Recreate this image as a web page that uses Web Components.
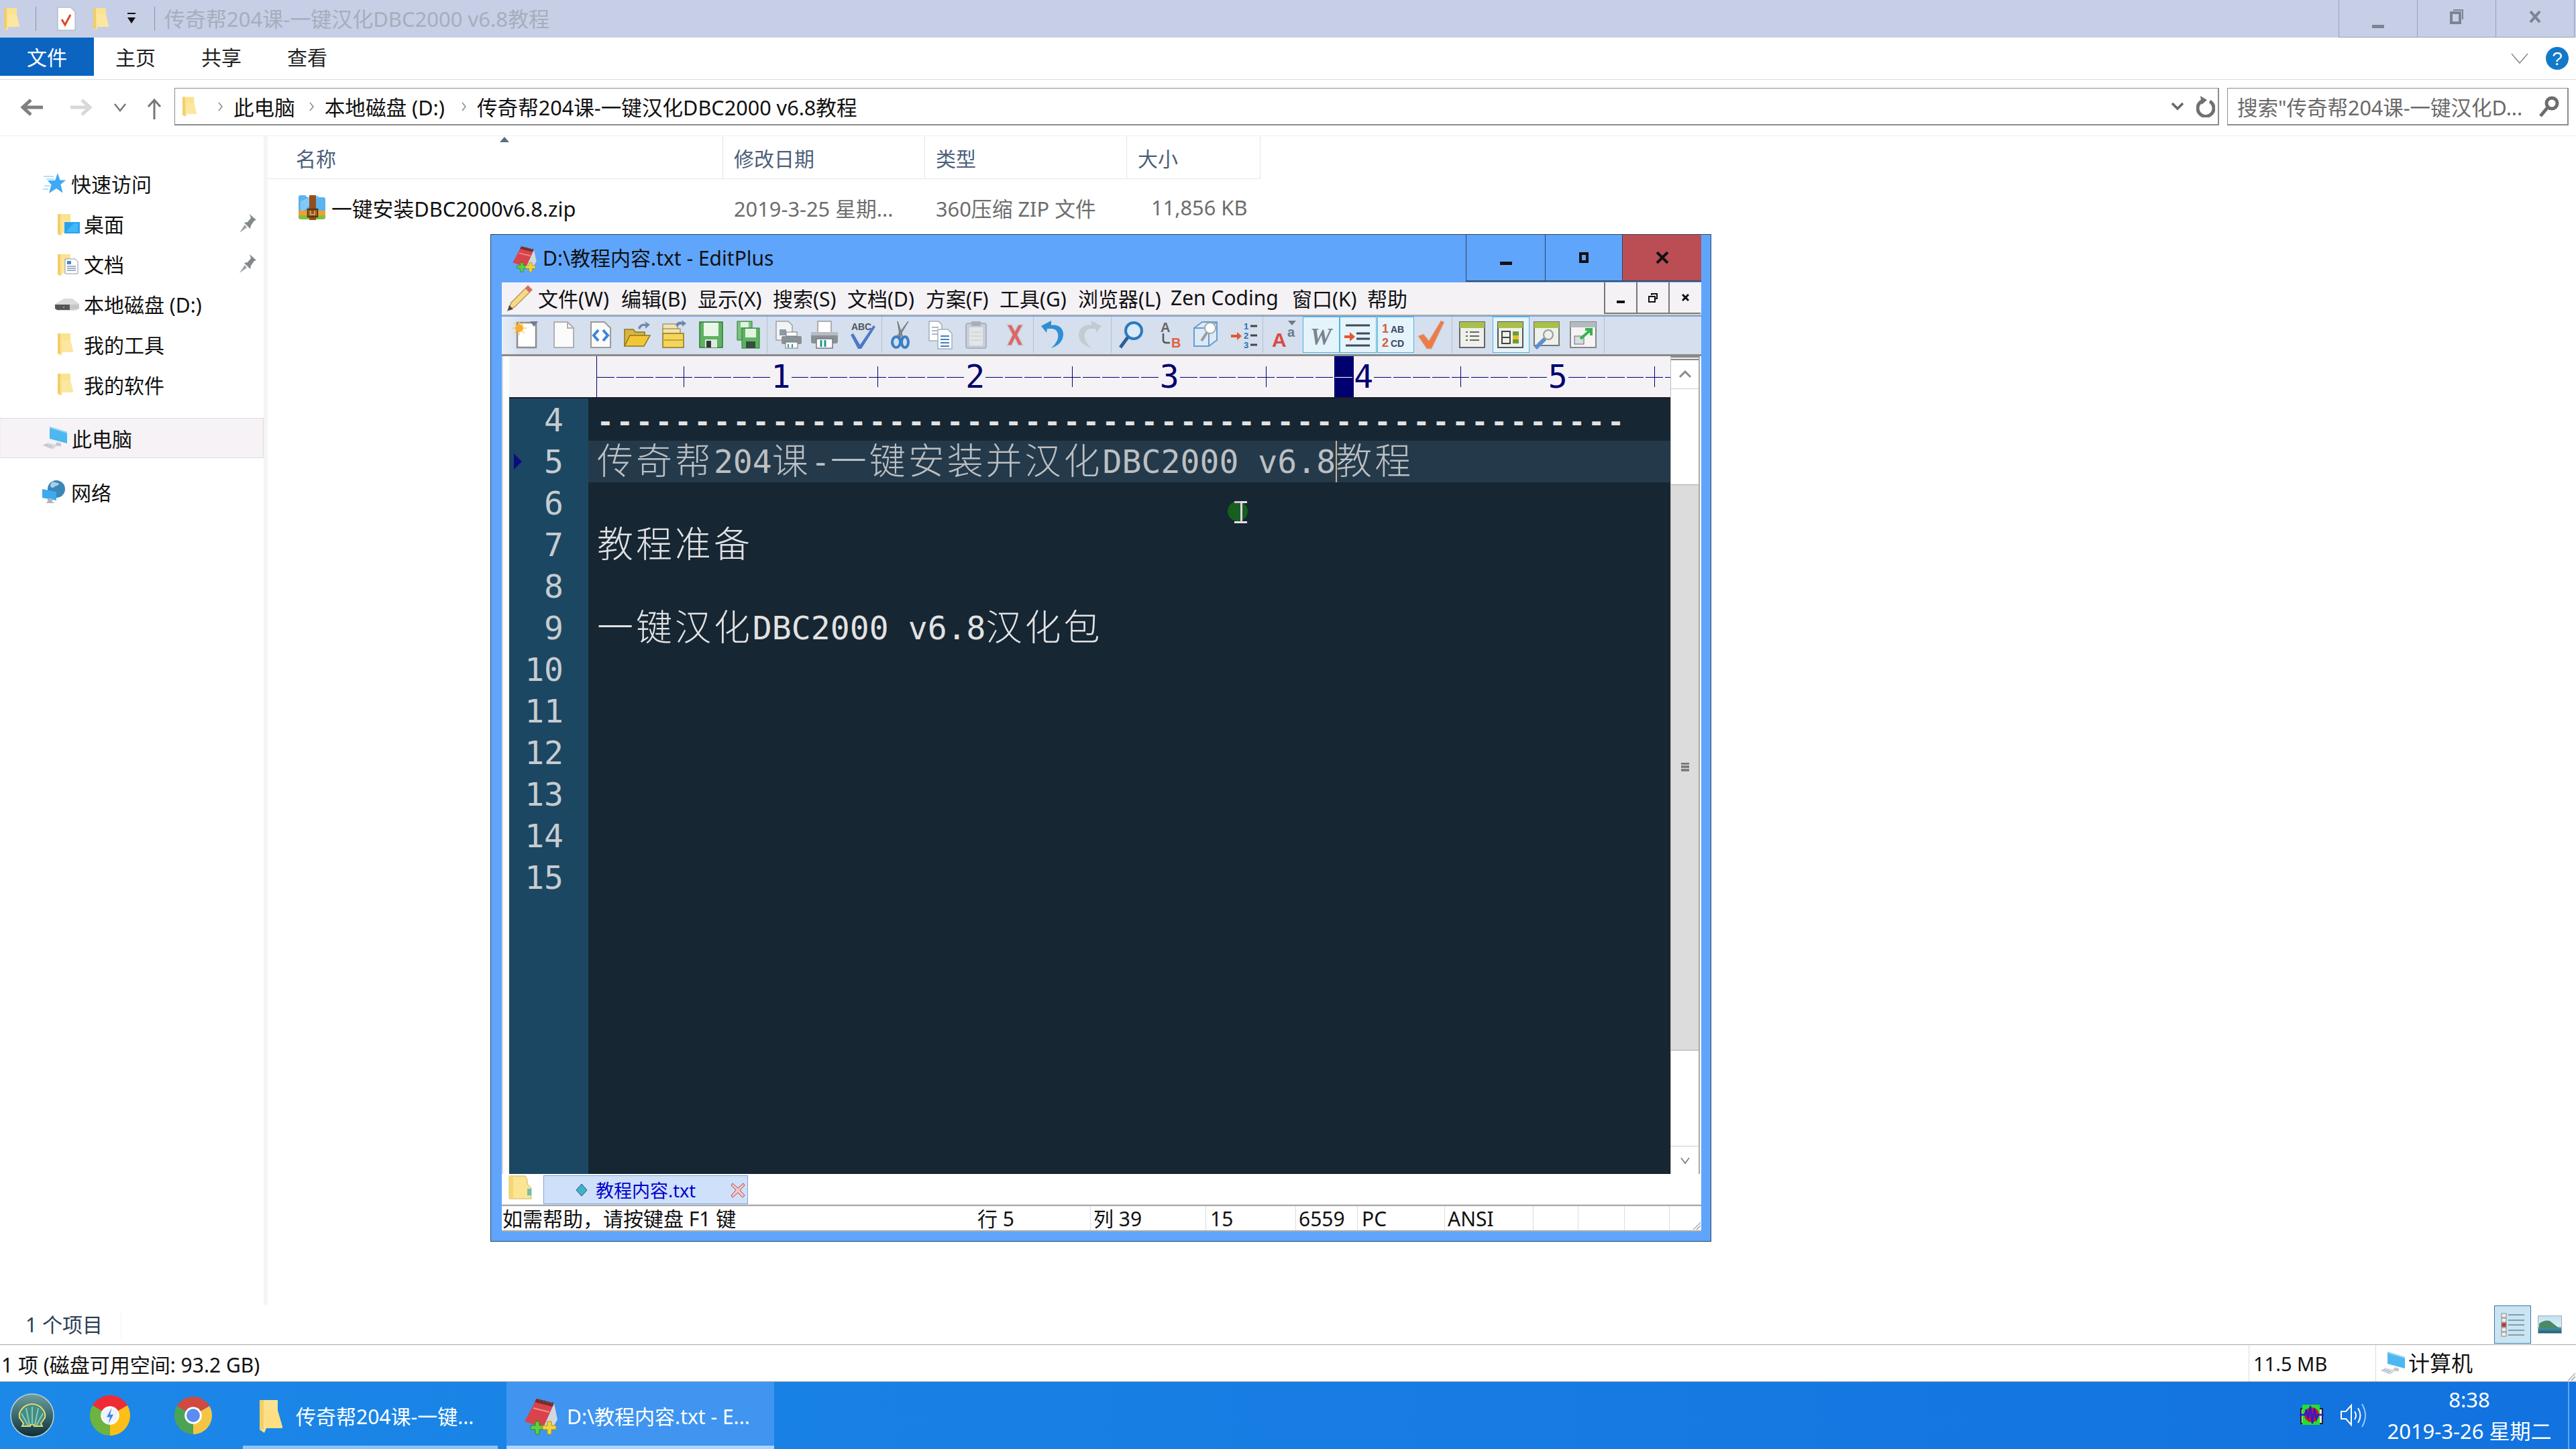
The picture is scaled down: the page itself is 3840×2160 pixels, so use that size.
<!DOCTYPE html>
<html lang="zh-CN">
<head>
<meta charset="utf-8">
<title>Explorer + EditPlus</title>
<style>
html,body{margin:0;padding:0;background:#fff}
body{width:3840px;height:2160px;overflow:hidden;position:relative;font:30px "Noto Sans","Noto Sans CJK SC",sans-serif;color:#111}
x-editplus{position:absolute;left:731px;top:349px}
</style>
</head>
<body>
<x-explorer></x-explorer>
<x-taskbar></x-taskbar>
<x-editplus></x-editplus>
<script>
const FOLD='<path d="M0 2h19v10l4 17v1H7l-2 5-5-3z" fill="#fae28f"/><path d="M0 2h4v31l-4-1z" fill="#f3cd66"/><path d="M4 12h15l4 17v1H7z" fill="#fbe79f"/>';
const ICONS={
folder:[24,36,FOLD],
foldertab:[36,38,'<path d="M2 1h24l3 6v6l6 6v16H2z" fill="#fbe592" stroke="#cdb467"/><path d="M2 1h6v34H2z" fill="#f6d674"/><path d="M29 20h6v10h-6z" fill="#74bcb6"/>'],
foldertask:[34,52,'<path d="M0 3h27v16l7 24v2H10l-3 7-7-5z" fill="#fae28f"/><path d="M0 3h6v44l-6-1z" fill="#f3cd66"/><path d="M6 19h21l7 24v2H10z" fill="#fcdf83"/>'],
folderdesk:[33,33,FOLD+'<rect x="10" y="14" width="23" height="17" fill="#2aa3ee"/><path d="M12 29l12-13h6v13z" fill="#44b6f6"/>'],
folderdoc:[33,33,FOLD+'<path d="M11 9h15l4 4v18H11z" fill="#fff" stroke="#8b98aa"/><path d="M14 12h6v5h-6z" fill="#4a86c8"/><path d="M14 20h13M14 23h13M14 26h13" stroke="#7f9abb" stroke-width="1.4"/>'],
doccheck:[28,36,'<path d="M1 1h19l7 7v27H1z" fill="#fff" stroke="#aab"/><path d="M7 19l5 8 8-15" fill="none" stroke="#d9492c" stroke-width="3"/>'],
star:[34,30,'<path d="M22 0l3.500 10.500H34l-7.500 6.500 3 12.500L20 23l-11 7 3.500-12.500L7 11h11z" fill="#3ea9f5"/><path d="M1 5h15M5 9h12M2 19h9M0 24h8" stroke="#9ad3fa" stroke-width="1.500"/>'],
drive:[36,20,'<path d="M0 10l14-8h12l10 8v7l-5 3H4l-4-3z" fill="#dcdcdc"/><path d="M0 11h22v8H3l-3-2z" fill="#555"/><rect x="12" y="14" width="2" height="2" fill="#4bd05b"/><path d="M22 11h14v6l-14 2z" fill="#c6c6c6"/>'],
computer:[37,34,'<path d="M11 0l26 8v17L11 18z" fill="#4db8f0"/><path d="M11 0l26 8v2L11 2z" fill="#8ed5f7"/><path d="M22 23l6 2v4h-10z" fill="#c3c7cc"/><path d="M0 28l8-4 15 4-8 6z" fill="#d7dade"/><path d="M3 28l5-2M7 29l6-2M10 31l6-2" stroke="#9ba2aa" stroke-dasharray="2 1"/>'],
network:[35,34,'<circle cx="21" cy="13" r="13" fill="#3c87b8"/><path d="M16 2c4 2 7 1 9 3-1 4-5 2-7 5-2 2-6 1-6-2 0-3 2-5 4-6z" fill="#a9cfe3"/><path d="M0 13l21 4v13L0 26z" fill="#3ea9ee"/><path d="M8 27h7v5l4 2H5l3-2z" fill="#aeb6bd"/>'],
zip:[40,38,'<path d="M0 4q0-3 3-3h7l3 3h24q3 0 3 3v20H0z" fill="#5cb3ee"/><path d="M3 10l18-8h10L8 24H3z" fill="#84c8f4" /><rect y="24" width="40" height="7" fill="#f0a02c"/><path d="M0 31h40v3q0 3-3 3H3q-3 0-3-3z" fill="#82c041"/><rect x="16" y="1" width="10" height="37" fill="#93501d"/><rect x="14" y="22" width="14" height="11" fill="none" stroke="#5f3410" stroke-width="2.500"/><path d="M18 24v6h6v-6" fill="none" stroke="#e4b36f" stroke-width="1.500"/>'],
pin:[25,28,'<path d="M15 0l10 9-3 1-5 7-1 5-9-9 5-1 5-6z" fill="#82898d"/><path d="M8 16L0 28l11-8z" fill="#9aa1a5"/>'],
canary:[60,60,'<g transform="scale(1.25)"><path d="M24 24L3.200 12A24 24 0 0 1 44.800 12Z" fill="#ef2b35"/><path d="M24 24L44.800 12A24 24 0 0 1 24 48Z" fill="#fcbf16"/><path d="M24 24L24 48A24 24 0 0 1 3.200 12Z" fill="#6cb33f"/><circle cx="24" cy="24" r="11" fill="#fff"/><circle cx="24" cy="24" r="9" fill="#eef3fa"/><path d="M26 15l-6 11h4l-2 8 6-11h-4z" fill="#3c83ef"/></g>'],
chrome:[56,56,'<g transform="scale(1.167)"><path d="M24 24L3.200 12A24 24 0 0 1 44.800 12Z" fill="#cf4a3f"/><path d="M24 24L44.800 12A24 24 0 0 1 24 48Z" fill="#f4c544"/><path d="M24 24L24 48A24 24 0 0 1 3.200 12Z" fill="#4ba356"/><circle cx="24" cy="24" r="11" fill="#fff"/><circle cx="24" cy="24" r="8.500" fill="#5b8dee"/></g>'],
shell:[66,66,'<defs><linearGradient id="s" x1="0" y1="0" x2="0" y2="1"><stop offset="0" stop-color="#6f9e9d"/><stop offset=".55" stop-color="#34646c"/><stop offset="1" stop-color="#0e2c35"/></linearGradient></defs><circle cx="33" cy="33" r="32" fill="url(#s)" stroke="#b9d2d6" stroke-width="1.500"/><path d="M14 36c-2-10 8-20 19-20s21 10 19 20l-6 9 2 4H36v-2h-6v2H18l2-4z" fill="#3f8f85" stroke="#e9d86a" stroke-width="2"/><path d="M33 20v28M24 22l5 25M42 22l-5 25M17 30l10 18M49 30L39 48" stroke="#8fc6b2" stroke-width="2" fill="none"/>'],
editplus:[56,55,'<path d="M20 2l26 7-16 36-28-9z" fill="#d9434b"/><path d="M20 2l26 7-2 5-27-7z" fill="#7d2a2a"/><path d="M46 9l5 24-9 16-12-4z" fill="#d3d8dc"/><path d="M24 6l2-3M30 7l2-3M36 9l2-3M42 10l2-3" stroke="#555" stroke-width="2"/><path d="M15 16l24 6" stroke="#ef8f8f" stroke-width="2"/><path d="M11 42h7v-6h6v6h7v6h-7v7h-6v-7h-7z" fill="#5dd040" stroke="#2c8a1c"/><path d="M29 42h7v-6h6v6h7v6h-7v7h-6v-7h-7z" fill="#f2d43a" stroke="#a2901c"/>'],
tray:[36,32,'<rect x="2" y="6" width="32" height="22" fill="#e6e6e6" stroke="#222" stroke-width="2"/><rect x="4" y="0" width="26" height="30" fill="#21e22a"/><ellipse cx="18" cy="15" rx="11" ry="11" fill="#d3112a"/><path d="M0 15h8l2-8 3 14 3-19 3 26 3-22 3 15 2-6h9" fill="none" stroke="#2a1bd1" stroke-width="2.500"/>'],
speaker:[40,34,'<path d="M2 11h7l8-9v29l-8-9H2z" fill="none" stroke="#fff" stroke-width="2"/><path d="M22 11q4 6 0 12" fill="none" stroke="#fff" stroke-width="2"/><path d="M27 6q7 11 0 22" fill="none" stroke="#fff" stroke-width="2"/><path d="M33 0q10 17 0 34" fill="none" stroke="#9cc9f5" stroke-width="2"/>'],
pencil:[40,40,'<path d="M2 38l5-12L32 1l6 6-25 25z" fill="#f5d88a" stroke="#b99a4e" stroke-width="1.500"/><path d="M28 5l6 6 4-4-6-6z" fill="#d66"/><path d="M2 38l2-8 6 6z" fill="#444"/>'],
tnew:[44,44,'<path d="M8 4h28v37H8z" fill="#fff" stroke="#8d8d8d" stroke-width="2.500"/><path d="M11 1v22M0 12h22M3 4l16 16M19 4L3 20" stroke="#f9cf63" stroke-width="1.500"/><circle cx="11" cy="12" r="6" fill="#f6ae2d"/><path d="M27 2h12l-6 8z" fill="#6d7d98"/>'],
tdoc:[44,44,'<path d="M8 3h20l9 9v29H8z" fill="#fbfbfb" stroke="#b0b0b0" stroke-width="2"/><path d="M28 3v9h9" fill="none" stroke="#b0b0b0" stroke-width="2"/>'],
thtml:[44,44,'<path d="M8 3h20l9 9v29H8z" fill="#fbfbfb" stroke="#9a9a9a" stroke-width="2"/><path d="M19 15l-7 8 7 8" fill="none" stroke="#3a86d8" stroke-width="4"/><path d="M26 15l7 8-7 8" fill="none" stroke="#3a86d8" stroke-width="4"/>'],
topen:[44,44,'<path d="M4 39V14h13l3 4h14v6" fill="#d9b540" stroke="#8d7524" stroke-width="1.500"/><path d="M4 39l8-16h30l-9 16z" fill="#f2c736" stroke="#8d7524" stroke-width="1.500"/><path d="M24 12q4-8 12-6l-2-4 8 5-7 6 0-4q-6-1-8 5z" fill="#6c88a8"/>'],
topenm:[44,44,'<path d="M5 6h22v8H5z" fill="#efe4c0" stroke="#8d7524"/><path d="M5 13h26v8H5z" fill="#f3e3a8" stroke="#8d7524"/><path d="M5 20h31v21H5z" fill="#f4d65a" stroke="#8d7524" stroke-width="1.500"/><path d="M5 30h31" stroke="#c8a52e" stroke-width="2"/><path d="M24 8q3-7 10-5l-1-3 7 5-6 5 0-3q-5-1-7 3z" fill="#6c88a8"/>'],
tsave:[44,44,'<rect x="5" y="3" width="34" height="38" fill="#5db360" stroke="#2d7a32" stroke-width="1.500"/><rect x="11" y="4" width="22" height="20" fill="#e9f6e8"/><rect x="13" y="29" width="18" height="12" fill="#dfe7e0"/><rect x="15" y="31" width="7" height="10" fill="#2e3b32"/>'],
tsaveall:[44,44,'<rect x="6" y="2" width="22" height="28" fill="#7cc07e" stroke="#2d7a32"/><rect x="11" y="3" width="12" height="8" fill="#e3f3e2"/><rect x="13" y="12" width="26" height="30" fill="#5db360" stroke="#2d7a32"/><rect x="18" y="13" width="16" height="13" fill="#e3f3e2"/><rect x="19" y="32" width="14" height="10" fill="#3a4b40"/>'],
tprev:[44,44,'<path d="M4 2h18l6 6v22H4z" fill="#f4f4f4" stroke="#9aa0a8" stroke-width="1.500"/><rect x="9" y="14" width="10" height="9" fill="#8c99a8"/><rect x="12" y="24" width="30" height="12" rx="2" fill="#8a9199"/><rect x="19" y="18" width="16" height="6" fill="#fff" stroke="#777"/><rect x="18" y="33" width="18" height="9" fill="#fff" stroke="#777"/><path d="M22 36v5M28 36v5" stroke="#2a9a8c" stroke-width="2"/>'],
tprint:[44,44,'<rect x="12" y="2" width="20" height="20" fill="#fff" stroke="#999" stroke-width="1.500"/><rect x="2" y="18" width="40" height="17" rx="3" fill="#8b9097"/><rect x="2" y="18" width="40" height="5" fill="#b7bcc2"/><rect x="10" y="28" width="24" height="14" fill="#fff" stroke="#777" stroke-width="1.500"/><path d="M17 30v10M23 30v10" stroke="#1f9a8e" stroke-width="3"/>'],
tspell:[44,44,'<text x="5" y="15" font-family="Liberation Sans" font-weight="700" font-size="14" fill="#4d5660" textLength="30">ABC</text><path d="M8 20l10 17L38 8l3 2-21 33h-5L4 22z" fill="#4e78c8"/>'],
tcut:[44,44,'<path d="M32 2L18 26l-3-2zM16 2l8 24-4 2z" fill="#9aa3ad" stroke="#666"/><ellipse cx="14" cy="33" rx="6" ry="8" fill="none" stroke="#3a7fc6" stroke-width="4"/><ellipse cx="27" cy="33" rx="5" ry="8" fill="none" stroke="#3a7fc6" stroke-width="4"/>'],
tcopy:[44,44,'<path d="M5 2h14l5 5v24H5z" fill="#fff" stroke="#a3aeba" stroke-width="1.500"/><path d="M9 11h10M9 16h10M9 21h10" stroke="#8ea2b8" stroke-width="1.500"/><path d="M18 14h15l6 6v23H18z" fill="#fff" stroke="#a3aeba" stroke-width="1.500"/><path d="M22 24h13M22 29h13M22 34h13M22 39h13" stroke="#3f84c4" stroke-width="2"/>'],
tpaste:[44,44,'<rect x="6" y="5" width="30" height="37" rx="3" fill="#c8cfd6" stroke="#a0a8b0" stroke-width="1.500"/><rect x="14" y="2" width="14" height="7" fill="#a7afb8"/><rect x="11" y="11" width="20" height="27" fill="#e2e6ea"/><path d="M13 18h16M13 24h16M13 30h16" stroke="#c3cad1"/>'],
tdel:[44,44,'<path d="M11 7h7l5 9 5-9h7l-8 15 8 16h-7l-5-10-5 10h-7l8-16z" fill="#e06666" stroke="#c7d0dd" stroke-width="1.500"/>'],
tundo:[44,44,'<path d="M6 8h12v-7l-15 8 8 10 1-6h8q10 2 8 14-2 8-10 15 17-6 18-19C37 12 28 6 18 8z" fill="#2f8fd3"/>'],
tredo:[44,44,'<path d="M38 8H26v-7l15 8-8 10-1-6h-8q-10 2-8 14 2 8 10 15C9 36 8 29 7 23 7 12 16 6 26 8z" fill="#c3cbd2"/>'],
tfind:[44,44,'<circle cx="25" cy="16" r="12" fill="#d9eafa" stroke="#2c79bf" stroke-width="4"/><path d="M16 26L5 41" stroke="#2c5f99" stroke-width="5"/>'],
trep:[44,44,'<text x="8" y="18" font-family="Liberation Sans" font-size="20" font-weight="700" fill="#666">A</text><path d="M12 20v10q0 4 5 4h5" fill="none" stroke="#555" stroke-width="2.500"/><text x="24" y="41" font-family="Liberation Sans" font-size="20" font-weight="700" fill="#e0613c">B</text>'],
tfiles:[44,44,'<path d="M4 12l12-9h22v27l-12 9H4z" fill="#dce9f7" stroke="#6a9ccd" stroke-width="2"/><path d="M4 12h22v27M26 12l12-9" fill="none" stroke="#6a9ccd" stroke-width="2"/><circle cx="28" cy="12" r="8" fill="#fff" stroke="#9aa" stroke-width="2"/><path d="M23 19l-8 12" stroke="#999" stroke-width="4"/>'],
tnum:[44,44,'<path d="M2 22h9v-4l7 6-7 6v-4H2z" fill="#e6562e"/><text x="21" y="14" font-family="Liberation Sans" font-size="13" font-weight="700" fill="#2b6fb0">1</text><text x="21" y="28" font-family="Liberation Sans" font-size="13" font-weight="700" fill="#2b6fb0">2</text><text x="21" y="42" font-family="Liberation Sans" font-size="13" font-weight="700" fill="#2b6fb0">3</text><path d="M31 9h10M31 23h10M31 37h10" stroke="#444" stroke-width="3"/>'],
tfont:[44,44,'<text x="3" y="40" font-family="Liberation Sans" font-size="30" font-weight="700" fill="#d94a44">A</text><text x="26" y="25" font-family="Liberation Sans" font-size="20" fill="#6d7a88">a</text><path d="M27 1h12l-6 7z" fill="#6d7a88"/>'],
tw:[44,44,'<text x="6" y="37" font-family="Liberation Serif" font-style="italic" font-size="36" fill="#79848e">W</text>'],
tind:[44,44,'<path d="M4 8h36M20 20h20M20 28h20M4 38h36" stroke="#3f4a55" stroke-width="3"/><path d="M2 23h8v-5l8 7-8 7v-5H2z" fill="#e6562e"/>'],
tab:[44,44,'<text x="2" y="19" font-family="Liberation Sans" font-size="18" font-weight="700" fill="#d85a3c">1</text><text x="15" y="19" font-family="Liberation Sans" font-size="14" font-weight="700" fill="#39485a">AB</text><text x="2" y="40" font-family="Liberation Sans" font-size="18" font-weight="700" fill="#d85a3c">2</text><text x="15" y="40" font-family="Liberation Sans" font-size="14" font-weight="700" fill="#39485a">CD</text>'],
tchk:[44,44,'<path d="M2 24l8-3 8 10L36 1l5 2-19 40h-7z" fill="#ee7c47" stroke="#c8b8a8"/>'],
twin1:[44,44,'<rect x="3" y="3" width="37" height="38" fill="#eef0ea" stroke="#666" stroke-width="2"/><rect x="3" y="3" width="37" height="9" fill="#a8c04a"/><path d="M12 18h3M12 24h3M12 30h3M18 18h14M18 24h14M18 30h14" stroke="#666" stroke-width="2"/>'],
twin2:[44,44,'<rect x="3" y="3" width="37" height="38" fill="#eef0ea" stroke="#555" stroke-width="2"/><rect x="3" y="3" width="37" height="9" fill="#a8c04a"/><rect x="9" y="17" width="12" height="18" fill="none" stroke="#444" stroke-width="2"/><path d="M9 26h12" stroke="#444" stroke-width="2"/><rect x="25" y="17" width="9" height="18" fill="#6d9c3c"/><rect x="25" y="23" width="9" height="6" fill="#e5c02a"/>'],
twin3:[44,44,'<rect x="3" y="3" width="37" height="35" fill="#eef0ea" stroke="#777" stroke-width="2"/><rect x="3" y="3" width="37" height="9" fill="#a8c04a"/><circle cx="24" cy="22" r="7" fill="none" stroke="#999" stroke-width="2"/><path d="M19 28L5 42" stroke="#5b8fd0" stroke-width="6"/>'],
twin4:[44,44,'<rect x="3" y="3" width="38" height="38" fill="#f4f4f4" stroke="#888" stroke-width="2"/><rect x="3" y="3" width="38" height="8" fill="#b3bac0"/><rect x="9" y="24" width="14" height="12" fill="#d8dde2" stroke="#667"/><path d="M18 28L33 15M25 14h9v9" fill="none" stroke="#37b24a" stroke-width="4"/>'],
};
class XIcon extends HTMLElement{
  connectedCallback(){
    const n=this.getAttribute('name'),i=ICONS[n]||[10,10,''];
    const sr=this.shadowRoot||this.attachShadow({mode:'open'});
    sr.innerHTML=`<style>:host{display:block;flex:none;line-height:0;width:${i[0]}px;height:${i[1]}px}svg{display:block;overflow:visible}</style><svg xmlns="http://www.w3.org/2000/svg" width="${i[0]}" height="${i[1]}" viewBox="0 0 ${i[0]} ${i[1]}">${i[2]}</svg>`;
  }
}
customElements.define('x-icon',XIcon);

class XSideRow extends HTMLElement{
  constructor(){super();this.attachShadow({mode:'open'}).innerHTML=`<style>
  :host{display:flex;align-items:center;height:60px;box-sizing:border-box;position:relative;color:#111}
  :host([active]){background:#f6f2f6;border:1px solid #ddd;border-left-color:#eee}
  .ic{flex:none;display:flex;align-items:center;justify-content:center}
  .p{margin-left:auto;margin-right:11px}
  </style><span class="ic" id="ic"></span><slot></slot><span class="p" id="p"></span>`}
  connectedCallback(){
    const lvl=this.getAttribute('level')==='2';
    const ic=this.shadowRoot.getElementById('ic');
    ic.style.marginLeft=(lvl?82:62)+'px';ic.style.width=(lvl?38:37)+'px';ic.style.marginRight=(lvl?5:7)+'px';
    ic.style.justifyContent=lvl?'flex-start':'center';
    if(lvl&&this.getAttribute('icon')!=='drive')ic.style.paddingLeft='4px',ic.style.width='34px';
    ic.innerHTML=`<x-icon name="${this.getAttribute('icon')}"></x-icon>`;
    if(this.hasAttribute('pin'))this.shadowRoot.getElementById('p').innerHTML='<x-icon name="pin"></x-icon>';
  }
}
customElements.define('x-side-row',XSideRow);

class XExplorer extends HTMLElement{
  constructor(){super();this.attachShadow({mode:'open'}).innerHTML=`<style>
  :host{display:flex;flex-direction:column;width:3840px;height:2060px;background:#fff;font:30px "Noto Sans","Noto Sans CJK SC",sans-serif;color:#111;overflow:hidden}
  .title{height:56px;flex:none;background:#c6cfe6;display:flex;align-items:center;position:relative}
  .title .t{color:#a6aebd;margin-left:14px;white-space:nowrap;font-size:31px;line-height:56px}
  .qs{width:1px;height:36px;background:#8b93a5;flex:none}
  .caps{margin-left:auto;display:flex;height:55px;align-self:flex-start;border-bottom:1px solid #98a2bb;margin-right:2px}
  .caps div{width:116px;border-left:1px solid #98a2bb;display:flex;align-items:center;justify-content:center}
  .caps div:last-child{border-right:1px solid #98a2bb}
  .tabs{height:62px;flex:none;display:flex;border-bottom:1px solid #dcdcdc;box-sizing:content-box;position:relative}
  .tabs span{display:block;height:57px;line-height:59px}
  .tabs .file{width:140px;background:#0c64c1;color:#fff;text-align:center;margin-right:32px}
  .tabs .m{width:128px;color:#222}
  .tabs .help{margin-left:auto;display:flex;align-items:center;margin-right:10px;height:56px;gap:24px;margin-top:3px}
  .addr{height:84px;flex:none;display:flex;align-items:flex-start;padding-top:12px;box-sizing:border-box;border-bottom:1px solid #f0f0f0}
  .navb{width:260px;flex:none;height:56px;position:relative}
  .navb svg{display:block}
  .box{height:56px;box-sizing:border-box;border:2px solid #8c8c8c;border-width:1px 2px 2px 1px;display:flex;align-items:center;white-space:nowrap}
  .ab{width:3048px;margin-right:12px;padding-left:10px;font-size:30.600px}
  .ab .c{width:16px;margin:0 11px;flex:none;display:flex;justify-content:center}
  .ab .end{margin-left:auto;display:flex;align-items:center;gap:18px;padding-right:4px}
  .sb{width:509px;color:#6a6a6a;padding-left:14px;font-size:30.500px}
  .sb svg{margin-left:auto;margin-right:12px}
  .panes{flex:1;display:flex;min-height:0}
  .side{width:393px;flex:none;padding-top:40px;box-sizing:border-box}
  .gapb{height:20px}
  .vs{width:6px;flex:none;background:#f5f5f5}
  .main{flex:1;min-width:0}
  .hdr,.row{display:grid;grid-template-columns:679px 301px 301px 199px;width:1480px}
  .hdr{height:64px;box-sizing:border-box;border-bottom:1px solid #e5e5e5;color:#4c607a;line-height:67px;position:relative;margin-top:0}
  .hdr>div{padding-left:16px;border-right:1px solid #e5e5e5;box-sizing:border-box;height:63px;overflow:hidden}
  .hdr>div:first-child{padding-left:42px}
  .arrow{position:absolute;left:346px;top:1px;width:0;height:0;border-left:7px solid transparent;border-right:7px solid transparent;border-bottom:8px solid #5a6b80}
  .row{height:60px;margin-top:12px;align-items:center;color:#6d6d6d;font-size:30.800px}
  .row>div{padding-left:16px;white-space:nowrap;overflow:hidden}
  .row>div.nm{padding-left:46px;color:#111;display:flex;align-items:center;gap:9px;overflow:visible}
  .row>div.r{padding-left:36px}
  .cnt{height:59px;flex:none;display:flex;align-items:center;position:relative;color:#2b3f55}
  .cnt .s{margin-left:38px;width:142px;border-right:1px solid #f0f0f0;height:40px;line-height:40px}
  .vw{margin-left:auto;display:flex;align-items:center;height:57px;margin-right:21px}
  .vw .d{width:55px;height:57px;box-sizing:border-box;background:#c9e4f3;border:1px solid #3a7aa0;display:flex;align-items:center;justify-content:center}
  .vw .l{margin-left:10px;width:36px;height:27px}
  .st{height:56px;flex:none;box-sizing:border-box;border-top:1px solid #aaa;border-bottom:1px solid #aaa;display:flex;align-items:center;line-height:52px;position:relative;padding-left:2px;white-space:nowrap}
  .st .a{width:3350px;flex:none;height:50px;padding-top:4px}
  .st .b{width:189px;flex:none;border-left:1px solid #ddd;padding-left:6px;box-sizing:border-box;height:54px;font-size:29px;padding-top:2px}
  .st .c{flex:1;border-left:1px solid #ddd;height:54px;display:flex;align-items:center;padding-left:6px;gap:5px;font-size:32px}
  .grip{position:absolute;right:1px;bottom:1px;width:12px;height:12px;background:repeating-linear-gradient(135deg,#bbb 0 2px,transparent 2px 4px);clip-path:polygon(100% 0,100% 100%,0 100%)}
  </style>
  <div class="title">
    <x-icon name="folder" style="margin-left:6px"></x-icon>
    <span class="qs" style="margin-left:23px"></span>
    <x-icon name="doccheck" style="margin-left:31px"></x-icon>
    <x-icon name="folder" style="margin-left:26px"></x-icon>
    <svg width="14" height="20" style="margin-left:26px;flex:none"><path d="M1 2h12" stroke="#111" stroke-width="2"/><path d="M1 8h12l-6 9z" fill="#111"/></svg>
    <span class="qs" style="margin-left:27px"></span>
    <span class="t">传奇帮204课-一键汉化DBC2000 v6.8教程</span>
    <div class="caps">
      <div><svg width="18" height="6" style="margin-top:24px"><rect width="18" height="5" fill="#7b8494"/></svg></div>
      <div><svg width="20" height="22" style="margin-top:-6px"><path d="M5 1h14v14" fill="none" stroke="#7b8494" stroke-width="2"/><rect x="2" y="5" width="13" height="15" fill="none" stroke="#7b8494" stroke-width="4"/></svg></div>
      <div><svg width="18" height="18" style="margin-top:-6px"><path d="M2 1l14 16M16 1L2 17" stroke="#7b8494" stroke-width="4"/></svg></div>
    </div>
  </div>
  <div class="tabs">
    <span class="file">文件</span><span class="m">主页</span><span class="m">共享</span><span class="m">查看</span>
    <div class="help"><svg width="28" height="18"><path d="M2 2l12 14L26 2" fill="none" stroke="#8a8a8a" stroke-width="1.500"/></svg>
    <svg width="36" height="36"><circle cx="18" cy="18" r="17" fill="#1279c9"/><text x="18" y="28" text-anchor="middle" font-family="Liberation Sans" font-size="28" fill="#fff">?</text></svg></div>
  </div>
  <div class="addr">
    <div class="navb">
      <svg width="260" height="56" viewBox="0 0 260 56"><path d="M64 29H34M46 18L34 29l12 11" fill="none" stroke="#808080" stroke-width="5"/><path d="M105 29h28M122 18l12 11-12 11" fill="none" stroke="#d8d8d8" stroke-width="5"/><path d="M171 24l8 10 8-10" fill="none" stroke="#777" stroke-width="2.500"/><path d="M230 47V19M221 28l9-10 9 10" fill="none" stroke="#777" stroke-width="3"/></svg>
    </div>
    <div class="box ab">
      <x-icon name="folder" style="transform:scale(.9)"></x-icon>
      <span class="c" style="margin-left:26px"><svg width="8" height="14"><path d="M1 1l5 6-5 6" fill="none" stroke="#888" stroke-width="1.500"/></svg></span>
      <span style="margin-right:14px">此电脑</span>
      <span class="c" style="margin-left:3px"><svg width="8" height="14"><path d="M1 1l5 6-5 6" fill="none" stroke="#888" stroke-width="1.500"/></svg></span>
      <span style="margin-right:18px">本地磁盘 (D:)</span>
      <span class="c" style="margin-left:3px"><svg width="8" height="14"><path d="M1 1l5 6-5 6" fill="none" stroke="#888" stroke-width="1.500"/></svg></span>
      <span>传奇帮204课-一键汉化DBC2000 v6.8教程</span>
      <div class="end"><svg width="20" height="13"><path d="M2 2l8 8 8-8" fill="none" stroke="#666" stroke-width="3.500"/></svg>
      <svg width="28" height="32" viewBox="0 0 28 32"><path d="M8 8a12 12 0 1 0 12 0" fill="none" stroke="#707070" stroke-width="5"/><path d="M6 0l10 6-8 7z" fill="#707070"/></svg></div>
    </div>
    <div class="box sb">搜索"传奇帮204课-一键汉化D...
      <svg width="30" height="32" viewBox="0 0 30 32"><circle cx="19" cy="11" r="8" fill="none" stroke="#6c6c6c" stroke-width="5"/><path d="M12 18L2 30" stroke="#6c6c6c" stroke-width="5"/></svg></div>
  </div>
  <div class="panes">
    <div class="side">
      <x-side-row icon="star">快速访问</x-side-row>
      <x-side-row icon="folderdesk" level="2" pin>桌面</x-side-row>
      <x-side-row icon="folderdoc" level="2" pin>文档</x-side-row>
      <x-side-row icon="drive" level="2">本地磁盘 (D:)</x-side-row>
      <x-side-row icon="folder" level="2">我的工具</x-side-row>
      <x-side-row icon="folder" level="2">我的软件</x-side-row>
      <div class="gapb"></div>
      <x-side-row icon="computer" active>此电脑</x-side-row>
      <div class="gapb"></div>
      <x-side-row icon="network">网络</x-side-row>
    </div>
    <div class="vs"></div>
    <div class="main">
      <div class="hdr"><div>名称</div><div>修改日期</div><div>类型</div><div>大小</div><i class="arrow"></i></div>
      <div class="row"><div class="nm"><x-icon name="zip"></x-icon><span>一键安装DBC2000v6.8.zip</span></div><div>2019-3-25 星期...</div><div>360压缩 ZIP 文件</div><div class="r">11,856 KB</div></div>
    </div>
  </div>
  <div class="cnt"><div class="s">1 个项目</div>
    <div class="vw"><div class="d"><svg width="36" height="38"><g stroke="#888"><rect x="1" y="2" width="7" height="6" fill="#eee"/><rect x="1" y="9" width="7" height="6" fill="#eee"/><rect x="1" y="16" width="7" height="6" fill="#c33"/><rect x="1" y="23" width="7" height="6" fill="#eee"/><rect x="1" y="30" width="7" height="6" fill="#eee"/></g><path d="M11 4h24M11 12h24M11 19h24M11 27h24M11 34h24" stroke="#6d8798" stroke-width="1.500"/></svg></div>
    <svg class="l" viewBox="0 0 36 27"><defs><linearGradient id="ls" x1="0" y1="0" x2="0" y2="1"><stop offset="0" stop-color="#bfe1f2"/><stop offset=".6" stop-color="#d9eff7"/><stop offset=".7" stop-color="#4f93ad"/><stop offset="1" stop-color="#12597d"/></linearGradient></defs><rect x=".5" y=".5" width="35" height="26" fill="url(#ls)" stroke="#aaa"/><path d="M2 19V12q8-6 16-4l15 12z" fill="#4a8a68"/></svg></div>
  </div>
  <div class="st"><span class="a">1 项 (磁盘可用空间: 93.2 GB)</span><span class="b">11.5 MB</span><span class="c"><x-icon name="computer"></x-icon><span>计算机</span></span><i class="grip"></i></div>`}
}
customElements.define('x-explorer',XExplorer);

class XTask extends HTMLElement{
  constructor(){super();this.attachShadow({mode:'open'}).innerHTML=`<style>
  :host{display:flex;align-items:center;height:100px;box-sizing:border-box;position:relative;color:#fff;white-space:nowrap;flex:none;font-size:30px}
  :host([active]){background:#3f95ef}
  :host::after{content:"";position:absolute;left:0;right:0;bottom:0;height:5px;background:#8cc4f8}
  :host([active])::after{background:#a9d5fc}
  </style><slot></slot>`}
}
customElements.define('x-task',XTask);

class XTaskbar extends HTMLElement{
  constructor(){super();this.attachShadow({mode:'open'}).innerHTML=`<style>
  :host{display:flex;align-items:center;width:3840px;height:100px;background:linear-gradient(90deg,#1c88e8,#1272df);color:#fff;font:30px "Noto Sans","Noto Sans CJK SC",sans-serif;position:relative}
  .clock{width:270px;flex:none;text-align:center;line-height:47px;margin-left:18px;margin-right:12px;font-size:31px}
  .edge{width:2px;height:100px;background:#5ea7f0;flex:none;margin-right:10px}
  </style>
  <x-icon name="shell" style="margin-left:15px"></x-icon>
  <x-icon name="canary" style="margin-left:53px"></x-icon>
  <x-icon name="chrome" style="margin-left:66px"></x-icon>
  <x-task style="margin-left:46px;width:380px"><x-icon name="foldertask" style="margin-left:25px;margin-right:20px"></x-icon>传奇帮204课-一键...</x-task>
  <x-task active style="margin-left:13px;width:399px"><x-icon name="editplus" style="margin-left:25px;margin-right:9px"></x-icon>D:\\教程内容.txt - E...</x-task>
  <x-icon name="tray" style="margin-left:auto"></x-icon>
  <x-icon name="speaker" style="margin-left:24px"></x-icon>
  <div class="clock">8:38<br>2019-3-26 星期二</div>
  <div class="edge"></div>`}
}
customElements.define('x-taskbar',XTaskbar);

class XRuler extends HTMLElement{
  constructor(){super();
    let cells='';
    for(let i=0;i<56;i++){
      const c=i+1;let cls='d',t='';
      if(c%10===0){cls='n';t=c/10}else if(c%5===0)cls='d k';
      if(i===38)cls='d cur';
      cells+=`<span class="${cls}">${t}</span>`;
    }
    this.attachShadow({mode:'open'}).innerHTML=`<style>
    :host{display:flex;height:63px;box-sizing:border-box;border-bottom:2px solid #1d1d24;background:#f5f2f6;overflow:hidden;flex:none}
    .l{width:131px;flex:none;border-right:1px solid #00006e;box-sizing:border-box}
    .cs{display:flex;flex:1;overflow:hidden;margin-left:-1px;}
    span{width:28.96px;flex:none;position:relative;display:flex;align-items:center;justify-content:center;font:48px/63px "DejaVu Sans Mono",monospace;color:#00006e}
    .d::before{content:"";position:absolute;left:1px;right:2px;top:31px;height:1px;background:#00006e}
    .k::after{content:"";position:absolute;left:14px;top:15px;height:31px;width:1px;background:#00006e}
    .cur{background:#00006e}.cur::before{background:#fff}
    </style><div class="l"></div><div class="cs">${cells}</div>`;
  }
}
customElements.define('x-ruler',XRuler);

class XCode extends HTMLElement{
  constructor(){super();
    const wrap=s=>s.replace(/[\u4e00-\u9fff]+/g,m=>`<span class="cjk">${m}</span>`);
    const lines={4:'<span class="dash">'+'-'.repeat(53)+'</span>',5:wrap('传奇帮204课-一键安装并汉化DBC2000 v6.8')+'<i class="caret"></i>'+wrap('教程'),6:'',7:wrap('教程准备'),8:'',9:wrap('一键汉化DBC2000 v6.8汉化包'),10:'',11:'',12:'',13:'',14:'',15:''};
    let nums='',txt='';
    for(const k of Object.keys(lines)){nums+=`<div>${k}</div>`;txt+=`<div class="ln${k==5?' cur':''}">${lines[k]}</div>`}
    this.attachShadow({mode:'open'}).innerHTML=`<style>
    :host{display:flex;flex:1;background:#162633;min-height:0;position:relative;font:48px/62px "DejaVu Sans Mono",monospace;overflow:hidden}
    .g{width:118px;flex:none;background:#1c4762;color:#c6ccd0;text-align:right;box-sizing:border-box;padding:1px 37px 0 0}
    .t{flex:1;padding-top:1px;color:#e2e2e2;letter-spacing:.08px}
    .ln{height:62px;padding-left:13px;white-space:pre;position:relative}
    .ln.cur{background:#243a4b;color:#bcbfc2}
    .dash{font-size:41px;font-weight:700;letter-spacing:4.280px;line-height:0}
    .cjk{font-family:"Noto Sans CJK SC",sans-serif;font-size:54px;letter-spacing:3.960px;font-weight:300;line-height:0;position:relative;top:2px}
    .caret{display:inline-block;width:2px;height:62px;margin-right:-2px;background:#c5b58f;vertical-align:top}
    .mark{position:absolute;left:7px;top:82px;width:0;height:0;border-top:12px solid transparent;border-bottom:12px solid transparent;border-left:12px solid #0b0b80}
    .cursor{position:absolute;left:1071px;top:150px;width:34px;height:36px}
    </style><div class="g">${nums}</div><div class="t">${txt}</div><i class="mark"></i>
    <svg class="cursor" viewBox="0 0 34 36"><circle cx="15" cy="18" r="15" fill="#155f1f"/><path d="M10 3h19v3H10zM10 33h19v3H10z" fill="#eadfe6"/><rect x="19" y="5" width="3" height="29" fill="#e8cfe4"/><rect x="10" y="3" width="9" height="3" fill="#e7b6df"/></svg>`;
  }
}
customElements.define('x-code',XCode);

class XEditPlus extends HTMLElement{
  constructor(){super();
    const M=[['文件(W)',802],['编辑(B)',926],['显示(X)',1040],['搜索(S)',1152],['文档(D)',1263],['方案(F)',1380],['工具(G)',1490],['浏览器(L)',1607],['Zen Coding',1745],['窗口(K)',1926],['帮助',2038],['',2110]];
    let menu='';for(let i=0;i<M.length-1;i++)menu+=`<span style="width:${M[i+1][1]-M[i][1]}px">${M[i][0]}</span>`;
    const T=[['tnew',785],['tdoc',840],['thtml',895],['topen',949],['topenm',1005],['tsave',1060],['tsaveall',1115],['|',1143],['tprev',1175],['tprint',1229],['tspell',1286],['|',1314],['tcut',1344],['tcopy',1402],['tpaste',1456],['tdel',1512],['|',1540],['tundo',1571],['tredo',1623],['|',1656],['tfind',1687],['trep',1744],['tfiles',1798],['tnum',1855],['|',1882],['tfont',1915],['tw',1969,1],['tind',2024,1],['tab',2080,1],['tchk',2134],['|',2164],['twin1',2195],['twin2',2252,1],['twin3',2306],['twin4',2360],['|',2391]];
    let x=748,tb='';
    for(const t of T){
      if(t[0]==='|'){tb+=`<i class="sep" style="margin-left:${t[1]-x}px"></i>`;x=t[1]+1}
      else{const l=t[1]-27.5;tb+=`<b class="btn${t[2]?' on':''}" style="margin-left:${l-x}px"><x-icon name="${t[0]}"></x-icon></b>`;x=l+55}
    }
    this.attachShadow({mode:'open'}).innerHTML=`<style>
    :host{display:flex;flex-direction:column;width:1820px;height:1502px;box-sizing:border-box;border:1px solid #2b4460;background:#60a5fc;font:30px "Noto Sans","Noto Sans CJK SC",sans-serif;color:#111}
    .cap{height:70px;flex:none;display:flex;align-items:center;padding-left:31px;padding-right:14px;box-sizing:border-box;color:#111}
    .cap .t{margin-left:6px;font-size:30px;white-space:nowrap;margin-top:-4px}
    .cb{margin-left:auto;display:flex;align-self:stretch}
    .cb div{width:118px;border-left:1px solid #2b4460;border-bottom:2px solid #3a4e66;display:flex;align-items:center;justify-content:center;box-sizing:border-box}
    .cb div:nth-child(2){width:115px}
    .cb .x{width:118px;background:#bb4e55}
    .in{flex:1;margin:0 14px 0 16px;display:flex;flex-direction:column;min-height:0}
    .menu{height:50px;flex:none;background:#f5f2f6;border-bottom:2px solid #aaa;box-sizing:border-box;display:flex;align-items:center;white-space:nowrap;position:relative;margin-top:1px}
    .menu span{display:block;flex:none;margin-top:-3px}
    .menu x-icon{margin:0 6px 0 7px;width:41px}
    .mdi{margin-left:auto;display:flex;height:47px;align-self:flex-start}
    .mdi div{width:48px;box-sizing:border-box;border:solid #777;border-width:0 0 2px 2px;display:flex;align-items:center;justify-content:center}
    .tool{height:59px;flex:none;margin-top:1px;background:#d5dfee;border-bottom:3px solid #8a8a8a;box-sizing:border-box;display:flex;align-items:center;padding-bottom:2px;background-image:linear-gradient(90deg,#e9eef6,#d5dfee 30px)}
    .btn{width:55px;height:54px;flex:none;display:flex;align-items:center;justify-content:center;box-sizing:border-box}
    .btn.on{background:#e5f3fb;border:1px solid #4fb4dc}
    .sep{width:1px;height:54px;flex:none;background:#b6bfcc}
    .ed{flex:1;display:flex;min-height:0;background:#fff}
    .lstrip{width:11px;flex:none;background:#fff;border-left:2px solid #d8d8d8;box-sizing:border-box}
    .col{width:1731px;flex:none;display:flex;flex-direction:column;min-height:0}
    .sc{flex:1;display:flex;flex-direction:column;border-right:2px solid #aaa;box-sizing:border-box;background:#fff;margin-right:2px;border-left:1px solid #bbb}
    .sc .top{height:6px;background:#eee;border-top:2px solid #888;border-bottom:2px solid #888;box-sizing:border-box;flex:none}
    .sc .bt{height:43px;flex:none;display:flex;align-items:center;justify-content:center;border-bottom:1px solid #ccc;box-sizing:border-box}
    .sc .bt.dn{border-bottom:1px solid #bbb;border-top:1px solid #ccc}
    .sc .sp{height:142px;flex:none}
    .sc .th{height:844px;flex:none;background:#dcdcdc;border-top:1px solid #aaa;border-bottom:1px solid #aaa;box-sizing:border-box;display:flex;align-items:center;justify-content:center}
    .tabs{height:46px;flex:none;background:#fff;display:flex;align-items:flex-start;box-sizing:border-box;padding-top:2px;border-bottom:1px solid #ddd}
    .tabs .tb{margin-left:18px;width:305px;height:43px;box-sizing:border-box;background:#cfe0fb;border:1px solid #7ba3d8;display:flex;align-items:center;color:#0000cc;font-size:27px;padding-left:48px}
    .stat{height:36px;flex:none;background:#fff;border-top:2px solid #aaa;border-bottom:2px solid #aaa;box-sizing:content-box;display:flex;line-height:38px;white-space:nowrap;position:relative;margin-bottom:14px}
    .stat span{display:block;flex:none;box-sizing:border-box;padding-left:4px;height:36px;border-right:1px solid #ddd;overflow:visible}
    .grip{position:absolute;right:1px;bottom:1px;width:12px;height:12px;background:repeating-linear-gradient(135deg,#bbb 0 2px,transparent 2px 4px);clip-path:polygon(100% 0,100% 100%,0 100%)}
    </style>
    <div class="cap"><x-icon name="editplus" style="transform:scale(.72);margin:0 -8px"></x-icon><span class="t">D:\\教程内容.txt - EditPlus</span>
      <div class="cb">
        <div><svg width="18" height="6" style="margin-top:18px"><rect width="18" height="5" fill="#111"/></svg></div>
        <div><svg width="14" height="16"><rect x="2" y="2" width="10" height="12" fill="none" stroke="#111" stroke-width="4"/></svg></div>
        <div class="x"><svg width="20" height="18"><path d="M2 1l16 16M18 1L2 17" stroke="#111" stroke-width="4"/></svg></div>
      </div>
    </div>
    <div class="in">
      <div class="menu"><x-icon name="pencil"></x-icon>${menu}
        <div class="mdi"><div><svg width="12" height="6" style="margin-top:14px"><rect width="12" height="4" fill="#111"/></svg></div>
        <div><svg width="14" height="14"><path d="M5 3V1h8v7h-3" fill="none" stroke="#111" stroke-width="2"/><rect x="1" y="5" width="9" height="8" fill="none" stroke="#111" stroke-width="2"/></svg></div>
        <div style="margin-right:1px"><svg width="11" height="11"><path d="M1 1l9 9M10 1l-9 9" stroke="#111" stroke-width="3"/></svg></div></div>
      </div>
      <div class="tool">${tb}</div>
      <div class="ed"><div class="lstrip"></div>
        <div class="col"><x-ruler></x-ruler><x-code></x-code></div>
        <div class="sc"><div class="top"></div>
          <div class="bt"><svg width="20" height="12"><path d="M2 10l8-8 8 8" fill="none" stroke="#8a8a8a" stroke-width="3"/></svg></div>
          <div class="sp"></div>
          <div class="th"><svg width="12" height="14" style="width:12px"><path d="M0 1h12M0 6h12M0 11h12" stroke="#777" stroke-width="3.500"/></svg></div>
          <div class="sp"></div>
          <div class="bt dn"><svg width="16" height="12"><path d="M2 2l6 8 6-8" fill="none" stroke="#8a8a8a" stroke-width="2"/></svg></div>
        </div>
      </div>
      <div class="tabs"><x-icon name="foldertab" style="margin-left:9px"></x-icon>
        <div class="tb" style="margin-left:17px"><svg width="16" height="18" style="margin-right:13px;flex:none"><path d="M8 0l8 9-8 9-8-9z" fill="#38b6c8" stroke="#3a4a78"/></svg><span>教程内容.txt</span><svg width="22" height="24" style="margin-left:52px;flex:none"><path d="M3 2l8 7 8-7 2 3-7 7 7 8-3 3-7-7-8 7-2-3 7-8-7-7z" fill="#efc6c6" stroke="#b44"/></svg></div>
      </div>
      <div class="stat"><span style="width:704px;border:0;padding-left:1px">如需帮助，请按键盘 F1 键</span><span style="width:174px;padding-left:5px">行 5</span><span style="width:172px">列 39</span><span style="width:134px;padding-left:6px">15</span><span style="width:92px">6559</span><span style="width:130px;padding-left:6px">PC</span><span style="width:132px">ANSI</span><span style="width:67px"></span><span style="width:69px"></span><span style="width:67px"></span><i class="grip"></i></div>
    </div>`;
  }
}
customElements.define('x-editplus',XEditPlus);
</script>
</body>
</html>
